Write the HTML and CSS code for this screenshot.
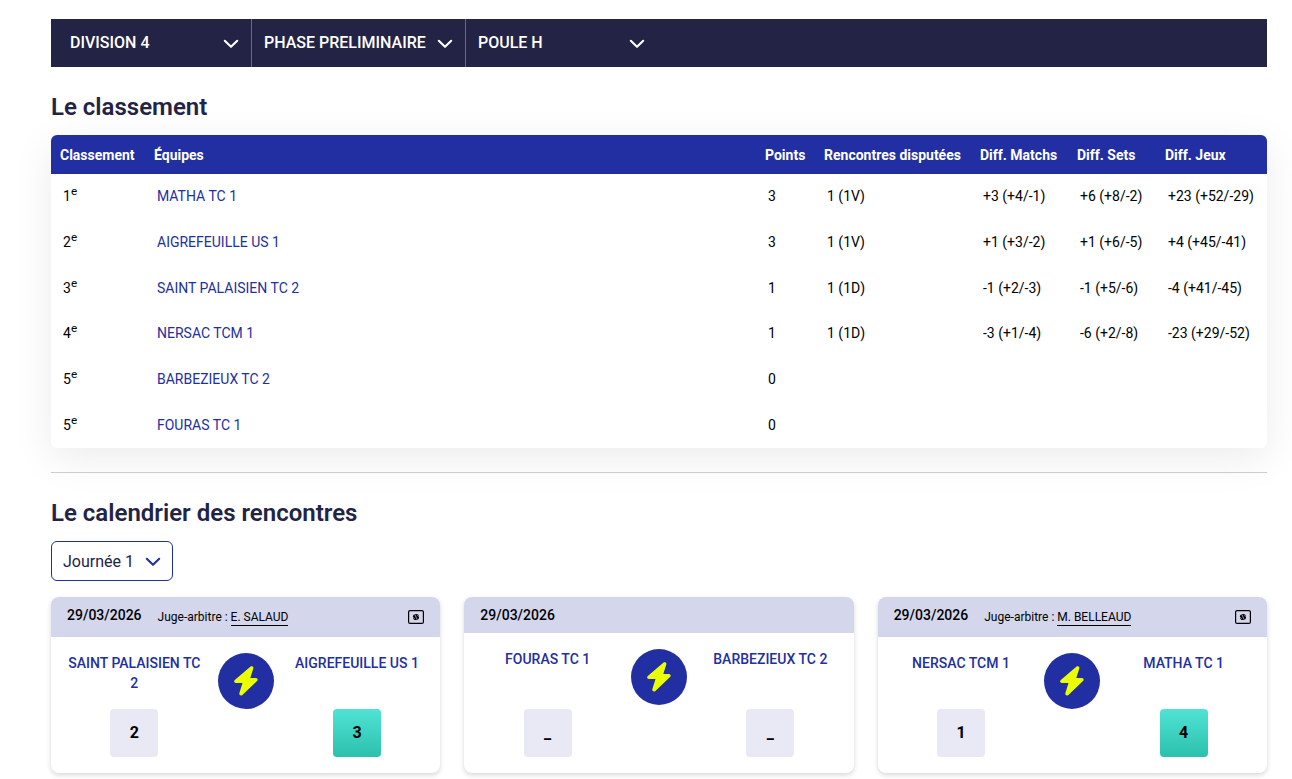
FILE: index.html
```html
<!DOCTYPE html>
<html lang="fr">
<head>
  <meta charset="UTF-8">
  <meta name="viewport" content="width=device-width, initial-scale=1.0">
  <title>Classement - Division 4</title>
  <link rel="stylesheet" href="styles.css">
</head>
<body>
  <!-- icons shared by the page -->
  <svg class="sprite" aria-hidden="true">
    <symbol id="chevron" viewBox="0 0 16 16">
      <path d="M1.8 4.8 8 10.8l6.2-6" fill="none" stroke="currentColor" stroke-width="2.1" stroke-linecap="round" stroke-linejoin="round"/>
    </symbol>
    <symbol id="bolt" viewBox="0 0 24 32">
      <path d="M16.600 1.600C18 .7 19.800 1.700 19.300 3.400L16.300 13h5.500c1.800 0 2.500 2 1.200 3.100L8.400 29.900c-1.500 1.200-3.600.1-3-1.800L8.500 18H1.900C.2 18-.5 16.100.8 15z" fill="#eaff00"/>
    </symbol>
    <symbol id="board" viewBox="0 0 16 14">
      <rect x=".600" y=".600" width="14.800" height="12.800" rx="1.500" fill="none" stroke="#000" stroke-width="1.200"/>
      <circle cx="8" cy="7" r="3.100" fill="#000"/>
      <path d="M6.700 4.200 9.300 9.800M5 7.200l1.600 1.700M9.400 5.100l1.600 1.700" stroke="#d4d6ec" stroke-width=".7"/>
    </symbol>
  </svg>

  <main>
    <form class="filters">
      <div class="filter filter-division">
        <select name="division" aria-label="Division">
          <option>DIVISION 4</option>
        </select>
        <svg class="chevron"><use href="#chevron"/></svg>
      </div>
      <div class="filter filter-phase">
        <select name="phase" aria-label="Phase">
          <option>PHASE PRELIMINAIRE</option>
        </select>
        <svg class="chevron"><use href="#chevron"/></svg>
      </div>
      <div class="filter filter-poule">
        <select name="poule" aria-label="Poule">
          <option>POULE H</option>
        </select>
        <svg class="chevron"><use href="#chevron"/></svg>
      </div>
    </form>

    <section class="ranking">
      <h2>Le classement</h2>
      <table>
        <thead>
          <tr>
            <th class="col-rank">Classement</th>
            <th>Équipes</th>
            <th class="col-points">Points</th>
            <th class="col-played">Rencontres disputées</th>
            <th class="col-matchs">Diff. Matchs</th>
            <th class="col-sets">Diff. Sets</th>
            <th class="col-jeux">Diff. Jeux</th>
          </tr>
        </thead>
        <tbody>
          <tr>
            <td>1<sup>e</sup></td>
            <td><a href="#">MATHA TC 1</a></td>
            <td>3</td>
            <td>1 (1V)</td>
            <td>+3 (+4/-1)</td>
            <td>+6 (+8/-2)</td>
            <td>+23 (+52/-29)</td>
          </tr>
          <tr>
            <td>2<sup>e</sup></td>
            <td><a href="#">AIGREFEUILLE US 1</a></td>
            <td>3</td>
            <td>1 (1V)</td>
            <td>+1 (+3/-2)</td>
            <td>+1 (+6/-5)</td>
            <td>+4 (+45/-41)</td>
          </tr>
          <tr>
            <td>3<sup>e</sup></td>
            <td><a href="#">SAINT PALAISIEN TC 2</a></td>
            <td>1</td>
            <td>1 (1D)</td>
            <td>-1 (+2/-3)</td>
            <td>-1 (+5/-6)</td>
            <td>-4 (+41/-45)</td>
          </tr>
          <tr>
            <td>4<sup>e</sup></td>
            <td><a href="#">NERSAC TCM 1</a></td>
            <td>1</td>
            <td>1 (1D)</td>
            <td>-3 (+1/-4)</td>
            <td>-6 (+2/-8)</td>
            <td>-23 (+29/-52)</td>
          </tr>
          <tr>
            <td>5<sup>e</sup></td>
            <td><a href="#">BARBEZIEUX TC 2</a></td>
            <td>0</td>
            <td></td>
            <td></td>
            <td></td>
            <td></td>
          </tr>
          <tr>
            <td>5<sup>e</sup></td>
            <td><a href="#">FOURAS TC 1</a></td>
            <td>0</td>
            <td></td>
            <td></td>
            <td></td>
            <td></td>
          </tr>
        </tbody>
      </table>
    </section>

    <section class="calendar">
      <h2>Le calendrier des rencontres</h2>
      <div class="day">
        <select name="journee" aria-label="Journée">
          <option>Journée 1</option>
        </select>
        <svg class="chevron"><use href="#chevron"/></svg>
      </div>

      <div class="matches">
        <article class="match">
          <header class="match-head">
            <span class="date">29/03/2026</span>
            <span class="referee">Juge-arbitre : <a href="#">E. SALAUD</a></span>
            <svg class="board"><use href="#board"/></svg>
          </header>
          <div class="match-body">
            <div class="team">
              <a href="#">SAINT PALAISIEN TC 2</a>
              <span class="score">2</span>
            </div>
            <div class="versus"><svg><use href="#bolt"/></svg></div>
            <div class="team">
              <a href="#">AIGREFEUILLE US 1</a>
              <span class="score winner">3</span>
            </div>
          </div>
        </article>

        <article class="match">
          <header class="match-head">
            <span class="date">29/03/2026</span>
          </header>
          <div class="match-body">
            <div class="team">
              <a href="#">FOURAS TC 1</a>
              <span class="score">_</span>
            </div>
            <div class="versus"><svg><use href="#bolt"/></svg></div>
            <div class="team">
              <a href="#">BARBEZIEUX TC 2</a>
              <span class="score">_</span>
            </div>
          </div>
        </article>

        <article class="match">
          <header class="match-head">
            <span class="date">29/03/2026</span>
            <span class="referee">Juge-arbitre : <a href="#">M. BELLEAUD</a></span>
            <svg class="board"><use href="#board"/></svg>
          </header>
          <div class="match-body">
            <div class="team">
              <a href="#">NERSAC TCM 1</a>
              <span class="score">1</span>
            </div>
            <div class="versus"><svg><use href="#bolt"/></svg></div>
            <div class="team">
              <a href="#">MATHA TC 1</a>
              <span class="score winner">4</span>
            </div>
          </div>
        </article>
      </div>
    </section>
  </main>
</body>
</html>
```
FILE: styles.css
```css
* {
  box-sizing: border-box;
}
body {
  font-family: Roboto, Arial, sans-serif;
  font-size: 14px;
  line-height: 20px;
  margin: 0;
  padding: 19px 25px 6px 51px;
  color: #000;
  background-color: #fff;
}
a {
  color: #222fa2;
  text-decoration: none;
}
h2 {
  margin: 0;
  font-size: 24px;
  line-height: 32px;
  font-weight: 600;
  color: #232345;
}
select {
  appearance: none;
  border: none;
  margin: 0;
  background: transparent;
  font-family: inherit;
  font-size: 16px;
  color: inherit;
  cursor: pointer;
}
.sprite {
  display: none;
}
.chevron {
  width: 16px;
  height: 16px;
  pointer-events: none;
}

/* filters */
.filters {
  display: flex;
  background-color: #232345;
  color: #fff;
}
.filter,
.day {
  display: grid;
  align-items: center;
}
.filter select,
.filter .chevron,
.day select,
.day .chevron {
  grid-area: 1 / 1;
}
.filter .chevron,
.day .chevron {
  justify-self: end;
  margin-top: 2px;
  margin-right: 12px;
}
.filter select {
  width: 100%;
  height: 48px;
  padding: 0 36px 2px 12px;
  font-weight: 500;
}
.filter-division {
  width: 201px;
  border-right: 1px solid #66688c;
}
.filter-division select {
  padding-left: 19px;
}
.filter-phase {
  width: 214px;
  border-right: 1px solid #66688c;
}
.filter-poule {
  width: 191px;
}

/* ranking */
.ranking {
  padding: 24px 0;
  border-bottom: 1px solid #d0d0d3;
}
.ranking h2 {
  margin-bottom: 12px;
}
table {
  width: 100%;
  height: 313px;
  border-collapse: separate;
  border-spacing: 0;
  border-radius: 6px;
  overflow: hidden;
  background-color: #fff;
  box-shadow: 0 10px 40px rgba(0, 0, 0, 0.08);
}
th {
  height: 39px;
  padding: 0 9px;
  background-color: #222fa2;
  color: #fff;
  font-weight: 700;
  text-align: left;
  white-space: nowrap;
}
td {
  padding: 11px 12px 12px;
  white-space: nowrap;
}
sup {
  line-height: 0;
}
.col-rank {
  width: 94px;
}
.col-points {
  width: 59px;
}
.col-played {
  width: 156px;
}
.col-matchs {
  width: 97px;
}
.col-sets {
  width: 88px;
}
.col-jeux {
  width: 111px;
}

/* calendar */
.calendar {
  padding-top: 24px;
}
.day {
  width: 122px;
  margin: 12px 0 16px;
  color: #222fa2;
}
.day select {
  width: 100%;
  height: 40px;
  padding: 0 32px 0 11px;
  border: 1px solid #222fa2;
  border-radius: 6px;
  color: #232345;
}
.matches {
  display: grid;
  grid-template-columns: repeat(3, 1fr);
  gap: 24px;
}
.match {
  display: flex;
  flex-direction: column;
  border-radius: 8px;
  overflow: hidden;
  background-color: #fff;
  box-shadow: 0 2px 5px rgba(0, 0, 0, 0.16);
}
.match-head {
  display: flex;
  align-items: flex-start;
  padding: 8px 16px;
  background-color: #d4d6ec;
}
.date {
  font-weight: 500;
}
.referee {
  margin: 2px auto 0 16px;
  padding-bottom: 2px;
  font-size: 12px;
}
.referee a {
  display: inline-block;
  line-height: 16px;
  border-bottom: 1px solid #000;
  color: #000;
}
.board {
  width: 16px;
  height: 14px;
  margin-top: 5px;
}
.match-body {
  flex: 1;
  display: grid;
  grid-template-columns: 1fr 56px 1fr;
  gap: 16px;
  padding: 16px;
}
.team {
  display: flex;
  flex-direction: column;
  align-items: center;
  justify-content: space-between;
  gap: 16px;
  text-align: center;
  font-weight: 500;
}
.score {
  display: flex;
  align-items: center;
  justify-content: center;
  width: 48px;
  height: 48px;
  border-radius: 4px;
  background-color: #e9e9f5;
  font-size: 16px;
  font-weight: 700;
}
.winner {
  background: linear-gradient(#50e3d5, #2bc1ad);
}
.versus {
  display: flex;
  align-items: center;
  justify-content: center;
  width: 56px;
  height: 56px;
  border-radius: 50%;
  background-color: #222fa2;
}
.versus svg {
  width: 24px;
  height: 32px;
}
```
